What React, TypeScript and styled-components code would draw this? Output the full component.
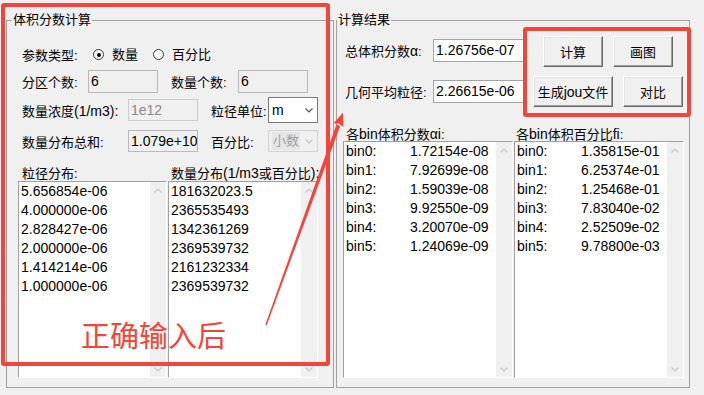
import React from 'react';
import styled, { createGlobalStyle } from 'styled-components';

const RED = '#f3453b';

const GlobalStyle = createGlobalStyle`
  html, body {
    margin: 0;
    padding: 0;
    background: #f0f0f0;
  }
  body {
    font-family: "Liberation Sans", "Noto Sans CJK SC", sans-serif;
    font-size: 13px;
    color: #000;
  }
`;

const Window = styled.div`
  position: relative;
  width: 704px;
  height: 395px;
  overflow: hidden;
  box-sizing: border-box;
  padding: 12px 0 0 6px;
  display: flex;
  align-items: flex-start;
  gap: 2px;
`;

const Group = styled.fieldset<{ $w: number; $pl: number; $pr: number }>`
  box-sizing: border-box;
  width: ${(p) => p.$w}px;
  min-width: 0;
  margin: 0;
  padding: 0 ${(p) => p.$pr}px 9px ${(p) => p.$pl}px;
  border: 1px solid #a0a0a0;
  display: flex;
  flex-direction: column;

  & > * {
    flex: none;
  }
`;

const Legend = styled.legend`
  margin-left: -6px;
  padding: 0 1px;
  font-size: 13px;
  line-height: 16px;
`;

// latin runs inside CJK labels render a bit larger, as on the original form
const Lt = styled.span`
  font-size: 14px;
`;

const Row = styled.div<{ $h: number; $mt: number }>`
  display: flex;
  align-items: center;
  height: ${(p) => p.$h}px;
  margin-top: ${(p) => p.$mt}px;
  padding-left: 4px;
`;

const Label = styled.span<{ $w?: number; $ml?: number }>`
  flex: none;
  width: ${(p) => (p.$w ? `${p.$w}px` : 'auto')};
  margin-left: ${(p) => p.$ml || 0}px;
  padding-top: 2px;
  line-height: 17px;
  white-space: nowrap;
`;

const Radio = styled.span<{ $ml?: number }>`
  display: flex;
  align-items: center;
  gap: 8px;
  margin-left: ${(p) => p.$ml || 0}px;
  padding-top: 1px;
  line-height: 17px;
`;

const RadioCircle = styled.span<{ $on?: boolean }>`
  box-sizing: border-box;
  width: 11px;
  height: 11px;
  border-radius: 50%;
  border: 1px solid #333;
  background: #fff;
  display: flex;
  align-items: center;
  justify-content: center;

  &::after {
    content: '';
    width: 4px;
    height: 4px;
    border-radius: 50%;
    background: #000;
    display: ${(p) => (p.$on ? 'block' : 'none')};
  }
`;

type BoxKind = 'readonly' | 'disabled' | 'normal';

const TextBox = styled.div<{ $w: number; $h: number; $kind: BoxKind }>`
  box-sizing: border-box;
  flex: none;
  width: ${(p) => p.$w}px;
  height: ${(p) => p.$h}px;
  line-height: ${(p) => p.$h - 2}px;
  padding-left: 2px;
  font-size: 14px;
  white-space: nowrap;
  overflow: hidden;
  border: 1px solid
    ${(p) => (p.$kind === 'disabled' ? '#cccccc' : p.$kind === 'readonly' ? '#b9b9b9' : '#a5a5a5')};
  background: ${(p) => (p.$kind === 'normal' ? '#fff' : '#f0f0f0')};
  color: ${(p) => (p.$kind === 'disabled' ? '#8a8a8a' : '#000')};
`;

const Combo = styled.div<{ $h: number; $disabled?: boolean }>`
  box-sizing: border-box;
  flex: none;
  width: 50px;
  height: ${(p) => p.$h}px;
  display: flex;
  align-items: center;
  justify-content: space-between;
  padding: 0 4px 0 3px;
  font-size: 14px;
  border: 1px solid ${(p) => (p.$disabled ? '#d4d4d4' : '#7a7a7a')};
  background: ${(p) => (p.$disabled ? '#f0f0f0' : '#fff')};
  color: ${(p) => (p.$disabled ? '#a0a0a0' : '#000')};
`;

const ComboText = styled.span<{ $disabled?: boolean }>`
  font-size: 13px;
  line-height: 18px;
  padding: 0 1px;
  background: ${(p) => (p.$disabled ? '#e6e6e6' : 'transparent')};
`;

const Chevron = ({ up, color }: { up?: boolean; color: string }) => (
  <svg width="8" height="5" viewBox="0 0 8 5">
    <polyline
      points={up ? '0.5,4.5 4,1 7.5,4.5' : '0.5,0.5 4,4 7.5,0.5'}
      fill="none"
      stroke={color}
      strokeWidth="1.2"
    />
  </svg>
);

const Lists = styled.div<{ $mt?: number }>`
  display: flex;
  gap: 1px;
  margin-top: ${(p) => p.$mt || 0}px;
`;

const ListBox = styled.div<{ $w: number; $h: number }>`
  box-sizing: border-box;
  flex: none;
  width: ${(p) => p.$w}px;
  height: ${(p) => p.$h}px;
  display: flex;
  background: #fff;
  border-left: 1px solid #a0a0a0;
  border-top: 1px solid #a0a0a0;
  border-right: 1px solid #fff;
  border-bottom: 1px solid #fff;
`;

const Items = styled.div`
  flex: 1;
  padding-left: 2px;
  font-size: 14px;
`;

const Item = styled.div`
  display: flex;
  height: 19px;
  line-height: 19px;
  white-space: nowrap;
`;

const BinName = styled.span`
  width: 64px;
  flex: none;
`;

const ScrollBar = styled.div`
  width: 16px;
  background: #f0f0f0;
  display: flex;
  flex-direction: column;
  align-items: center;
  justify-content: space-between;
  padding: 6px 0 5px;
`;

const Top = styled.div`
  display: flex;
  margin-top: 8px;
`;

const FieldCol = styled.div`
  display: flex;
  flex-direction: column;
  gap: 18px;
  margin-left: 2px;
  padding-top: 3px;
`;

const FieldRow = styled.div`
  display: flex;
  align-items: center;
`;

const ButtonCol = styled.div`
  display: flex;
  flex-direction: column;
  gap: 9px;
  margin-left: 7px;
`;

const ButtonRow = styled.div<{ $pl?: number }>`
  display: flex;
  gap: 10px;
  padding-left: ${(p) => p.$pl || 0}px;
`;

const Btn = styled.button<{ $w: number }>`
  box-sizing: border-box;
  width: ${(p) => p.$w}px;
  height: 31px;
  padding: 0;
  font-family: inherit;
  font-size: 13px;
  color: #000;
  background: #f0f0f0;
  border: 1px solid;
  border-color: #fff #696969 #696969 #fff;
  box-shadow: inset -1px -1px 0 #a0a0a0, inset 1px 1px 0 #e3e3e3;
`;

const ListTitles = styled.div`
  display: grid;
  grid-template-columns: 170px 170px;
  margin-top: 19px;
  height: 15px;
  line-height: 16px;
  padding-left: 3px;
  white-space: nowrap;
`;

const Callout = styled.div<{ $x: number; $y: number; $w: number; $h: number }>`
  position: absolute;
  left: ${(p) => p.$x}px;
  top: ${(p) => p.$y}px;
  width: ${(p) => p.$w}px;
  height: ${(p) => p.$h}px;
  box-sizing: border-box;
  border: 4px solid ${RED};
  border-radius: 3px;
  pointer-events: none;
`;

const Note = styled.div`
  position: absolute;
  left: 81px;
  top: 320px;
  font-family: "Noto Sans CJK SC", sans-serif;
  font-size: 29px;
  line-height: 29px;
  color: ${RED};
  white-space: nowrap;
  pointer-events: none;
`;

const Overlay = styled.svg`
  position: absolute;
  left: 0;
  top: 0;
  pointer-events: none;
`;

const sizes = ['5.656854e-06', '4.000000e-06', '2.828427e-06', '2.000000e-06', '1.414214e-06', '1.000000e-06'];
const counts = ['181632023.5', '2365535493', '1342361269', '2369539732', '2161232334', '2369539732'];
const alphas = ['1.72154e-08', '7.92699e-08', '1.59039e-08', '9.92550e-09', '3.20070e-09', '1.24069e-09'];
const fracs = ['1.35815e-01', '6.25374e-01', '1.25468e-01', '7.83040e-02', '2.52509e-02', '9.78800e-03'];

const Scroll = () => (
  <ScrollBar>
    <Chevron up color="#c8c8c8" />
    <Chevron color="#c8c8c8" />
  </ScrollBar>
);

const PlainList = ({ w, h, rows }: { w: number; h: number; rows: string[] }) => (
  <ListBox $w={w} $h={h}>
    <Items>
      {rows.map((r, i) => (
        <Item key={i}>{r}</Item>
      ))}
    </Items>
    <Scroll />
  </ListBox>
);

const BinList = ({ rows }: { rows: string[] }) => (
  <ListBox $w={170} $h={237}>
    <Items>
      {rows.map((r, i) => (
        <Item key={i}>
          <BinName>bin{i}:</BinName>
          {r}
        </Item>
      ))}
    </Items>
    <Scroll />
  </ListBox>
);

const Arrow = () => (
  <Overlay width="704" height="395" viewBox="0 0 704 395">
    <polygon points="265.3,324.8 266.7,325.3 340.2,125.9 336.4,124.5" fill={RED} />
    <polygon points="343,112.5 343.4,127 338.6,123.5 333.4,123.6" fill={RED} />
  </Overlay>
);

export default function App() {
  return (
    <>
      <GlobalStyle />
      <Window>
        <Group $w={328} $pl={11} $pr={15}>
          <Legend>体积分数计算</Legend>
          <Row $h={24} $mt={14}>
            <Label $w={71}>参数类型:</Label>
            <Radio>
              <RadioCircle $on />
              数量
            </Radio>
            <Radio $ml={15}>
              <RadioCircle />
              百分比
            </Radio>
          </Row>
          <Row $h={23} $mt={4}>
            <Label $w={66}>分区个数:</Label>
            <TextBox $w={70} $h={23} $kind="readonly">6</TextBox>
            <Label $w={67} $ml={13}>数量个数:</Label>
            <TextBox $w={70} $h={23} $kind="readonly">6</TextBox>
          </Row>
          <Row $h={26} $mt={4}>
            <Label $w={106}>
              数量浓度<Lt>(1/m3):</Lt>
            </Label>
            <TextBox $w={70} $h={22} $kind="disabled">1e12</TextBox>
            <Label $w={57} $ml={13}>粒径单位:</Label>
            <Combo $h={26}>
              <span>m</span>
              <Chevron color="#555" />
            </Combo>
          </Row>
          <Row $h={22} $mt={7}>
            <Label $w={106}>数量分布总和:</Label>
            <TextBox $w={70} $h={22} $kind="readonly">1.079e+10</TextBox>
            <Label $w={57} $ml={13}>百分比:</Label>
            <Combo $h={22} $disabled>
              <ComboText $disabled>小数</ComboText>
              <Chevron color="#c4c4c4" />
            </Combo>
          </Row>
          <Row $h={18} $mt={11}>
            <Label $w={149}>粒径分布:</Label>
            <Label>
              数量分布<Lt>(1/m3</Lt>或百分比<Lt>):</Lt>
            </Label>
          </Row>
          <Lists>
            <PlainList w={149} h={197} rows={sizes} />
            <PlainList w={150} h={197} rows={counts} />
          </Lists>
        </Group>

        <Group $w={354} $pl={6} $pr={6}>
          <Legend>计算结果</Legend>
          <Top>
            <FieldCol>
              <FieldRow>
                <Label $w={88}>
                  总体积分数<Lt>α</Lt>:
                </Label>
                <TextBox $w={93} $h={23} $kind="normal">1.26756e-07</TextBox>
              </FieldRow>
              <FieldRow>
                <Label $w={88}>几何平均粒径:</Label>
                <TextBox $w={93} $h={23} $kind="normal">2.26615e-06</TextBox>
              </FieldRow>
            </FieldCol>
            <ButtonCol>
              <ButtonRow $pl={10}>
                <Btn $w={60}>计算</Btn>
                <Btn $w={60}>画图</Btn>
              </ButtonRow>
              <ButtonRow>
                <Btn $w={80}>
                  生成<Lt>jou</Lt>文件
                </Btn>
                <Btn $w={60}>对比</Btn>
              </ButtonRow>
            </ButtonCol>
          </Top>
          <ListTitles>
            <span>
              各<Lt>bin</Lt>体积分数<Lt>αi</Lt>:
            </span>
            <span>
              各<Lt>bin</Lt>体积百分比<Lt>fi</Lt>:
            </span>
          </ListTitles>
          <Lists $mt={0}>
            <BinList rows={alphas} />
            <BinList rows={fracs} />
          </Lists>
        </Group>

        <Callout $x={1} $y={3} $w={329} $h={363} />
        <Callout $x={523} $y={27} $w={168} $h={90} />
        <Note>正确输入后</Note>
        <Arrow />
      </Window>
    </>
  );
}
